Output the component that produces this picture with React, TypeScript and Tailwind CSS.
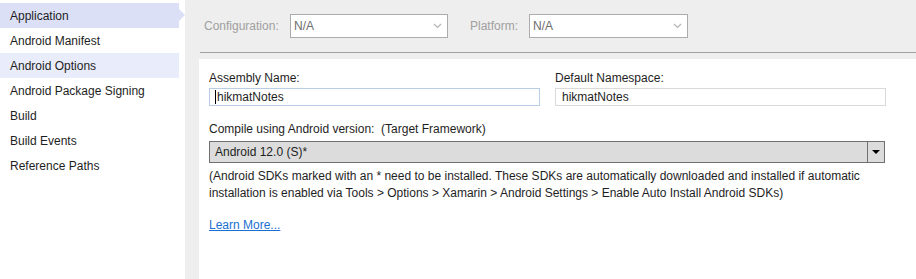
import React from 'react';

const pages = [
  'Application',
  'Android Manifest',
  'Android Options',
  'Android Package Signing',
  'Build',
  'Build Events',
  'Reference Paths',
];

function Chevron() {
  return (
    <svg width="9" height="6" viewBox="0 0 9 6" className="shrink-0">
      <polyline points="1,1 4.5,4.5 8,1" fill="none" stroke="#b4b4b4" strokeWidth="1.2" />
    </svg>
  );
}

function DisabledSelect({ width }: { width: string }) {
  return (
    <div className={`${width} h-[24px] flex items-center justify-between bg-white border border-[#acacac] pl-[3px] pr-[5px]`}>
      <span className="text-[#6d6d6d]">N/A</span>
      <Chevron />
    </div>
  );
}

export default function App() {
  return (
    <div
      className="flex w-[916px] h-[279px] overflow-hidden bg-[#eeeeee] text-[#1e1e1e] text-[12px]"
      style={{ fontFamily: '"Liberation Sans", Arial, sans-serif' }}
    >
      <aside className="w-[185px] shrink-0 bg-white pt-[3px]">
        {pages.map((p, i) => (
          <div
            key={p}
            className={`relative w-[179px] h-[25px] flex items-center pl-[10px] ${
              i === 0 ? 'bg-[#dce0f7]' : i === 2 ? 'bg-[#e9ecfa]' : ''
            }`}
          >
            {p}
            {i === 0 && (
              <span className="absolute left-[179px] top-[6px] w-0 h-0 border-y-[6px] border-y-transparent border-l-[6px] border-l-[#dce0f7]" />
            )}
          </div>
        ))}
      </aside>

      <main className="flex-1 flex flex-col pl-[14px]">
        <div className="h-[53px] flex items-center pl-[4px] border-b border-[#a0a0a0] ml-[1px]">
          <span className="text-[#a0a0a0] w-[86px]">Configuration:</span>
          <DisabledSelect width="w-[158px]" />
          <span className="text-[#a0a0a0] ml-[22px] w-[59px]">Platform:</span>
          <DisabledSelect width="w-[159px]" />
        </div>

        <div className="mt-[6px] flex-1 bg-white pl-[10px] pt-[11px]">
          <div className="flex gap-[15px]">
            <div className="w-[331px]">
              <div className="h-[17px] leading-[17px]">Assembly Name:</div>
              <div className="mt-[1px] h-[18px] border border-[#b9cde4] flex items-center pl-[5px]">
                <span className="w-px h-[14px] bg-black mr-px" />
                hikmatNotes
              </div>
            </div>
            <div className="w-[331px]">
              <div className="h-[17px] leading-[17px]">Default Namespace:</div>
              <div className="mt-[1px] h-[18px] border border-[#dadada] flex items-center pl-[6px]">hikmatNotes</div>
            </div>
          </div>

          <div className="mt-[15px] h-[17px] leading-[17px]">Compile using Android version:&nbsp; (Target Framework)</div>
          <div className="mt-[3px] w-[676px] h-[22px] flex bg-[#dcdcdc] border border-[#707070]">
            <span className="flex-1 flex items-center pl-[5px]">Android 12.0 (S)*</span>
            <span className="w-[17px] border-l border-[#707070] flex items-center justify-center">
              <span className="w-0 h-0 border-x-[4px] border-x-transparent border-t-[4px] border-t-black" />
            </span>
          </div>

          <p className="mt-[5px] leading-[17px]">
            (Android SDKs marked with an * need to be installed. These SDKs are automatically downloaded and installed if automatic
            <br />
            installation is enabled via Tools &gt; Options &gt; Xamarin &gt; Android Settings &gt; Enable Auto Install Android SDKs)
          </p>

          <a className="block mt-[14px] text-[#1a6fd1] underline w-fit">Learn More...</a>
        </div>
      </main>
    </div>
  );
}
